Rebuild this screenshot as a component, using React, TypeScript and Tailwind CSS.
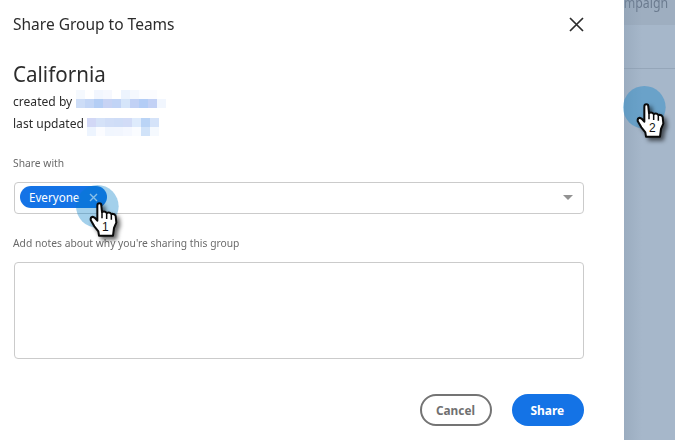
import React from 'react';

const createdCells = [
  ['#f5f9fe', '#ffffff', '#f2f6fe', '#f6f8fe', '#ffffff', '#edf4fe', '#f5f8fe', '#fbfcff', '#fbfcff', '#ffffff'],
  ['#cdddf7', '#c3d6f6', '#b4cef5', '#c7d3f4', '#c1d4f6', '#d5e5fa', '#c1d1f5', '#b3cdf6', '#c2d1f5', '#f1f6fe'],
];
const updatedCells = [
  ['#d2d8f6', '#d5e2f8', '#d1def7', '#cfddf7', '#d2dcf7', '#deebfc', '#bad4f6', '#d5e3f9'],
  ['#edf4fe', '#fbfcff', '#f1f6fe', '#f2f6fe', '#f5f8ff', '#fafcff', '#d1e3f9', '#f5f9fe'],
];

function Mosaic({ rows }: { rows: string[][] }) {
  return (
    <div>
      {rows.map((row, r) => (
        <div key={r} className="flex">
          {row.map((color, c) => (
            <span key={c} className="h-[9px] w-[9px]" style={{ backgroundColor: color }} />
          ))}
        </div>
      ))}
    </div>
  );
}

function Pointer({ step }: { step: string }) {
  return (
    <svg width="70" height="70" viewBox="0 0 210 210" className="block overflow-visible">
      <circle cx="82" cy="79" r="64" fill="rgb(0,125,200)" fillOpacity="0.36" />
      <g className="[filter:drop-shadow(9px_9px_7px_rgba(0,0,0,0.6))]">
        <path
          d="M82 121 L82 77 Q82 70 88 70 Q94 70 94 77 L96 96 Q105 92 110 99 Q119 95 124 102 Q134 100 137 108 L139 128 L132 144 L129 167 L87 167 L85 154 L73 139 L62 120 Q61 111 68 110 Q74 111 82 122 Z"
          fill="white"
          stroke="#0a0a0a"
          strokeWidth="6"
          strokeLinejoin="round"
        />
      </g>
      <path d="M96 96 V115 M110 99 V117 M124 102 V119" stroke="#0a0a0a" strokeWidth="4.5" />
      <text x="106" y="153" textAnchor="middle" className="font-['Liberation_Sans',sans-serif] text-[36px]" fill="#111">
        {step}
      </text>
    </svg>
  );
}

function Cross({ size, color, width }: { size: number; color: string; width: number }) {
  return (
    <svg width={size} height={size} viewBox={`0 0 ${size} ${size}`} className="block">
      <path d={`M1 1 L${size - 1} ${size - 1} M${size - 1} 1 L1 ${size - 1}`} stroke={color} strokeWidth={width} />
    </svg>
  );
}

export default function App() {
  return (
    <div className="relative flex h-[440px] w-[675px] overflow-hidden bg-white font-['Noto_Sans','Open_Sans',sans-serif] text-[#2c2c2c]">
      <main className="w-[624px] shrink-0 pl-[13px]">
        <header className="flex h-[48px] w-[571px] items-center justify-between">
          <h1 className="origin-left scale-x-[0.94] text-[16.5px] whitespace-nowrap">Share Group to Teams</h1>
          <button aria-label="Close"><Cross size={15} color="#2c2c2c" width={1.7} /></button>
        </header>
        <h2 className="mt-[9px] h-[33px] origin-left scale-x-[0.935] text-[22px] leading-[33px]">California</h2>
        <div className="flex h-[22px] items-start">
          <span className="w-[63px] origin-left scale-x-[0.93] text-[13px] leading-[23px] whitespace-nowrap">created by</span>
          <Mosaic rows={createdCells} />
        </div>
        <div className="flex h-[22px] items-start">
          <span className="w-[74px] origin-left scale-x-[0.93] text-[13px] leading-[23px] whitespace-nowrap">last updated</span>
          <div className="mt-[6px]"><Mosaic rows={updatedCells} /></div>
        </div>
        <label className="mt-[20px] block h-[18px] origin-left scale-x-[0.895] text-[11.5px] leading-[18px] text-[#6a6a6a]">Share with</label>
        <div className="mt-[10px] ml-px flex h-[32px] w-[570px] items-center rounded-[4px] border border-[#cbcbcb] pr-[10px] pl-[5px]">
          <div className="flex h-[22px] w-[87px] -translate-y-px items-center rounded-full bg-[#1473e6] pl-[9px] text-white">
            <span className="w-[60px] origin-left translate-y-px scale-x-[0.93] text-[12.5px]">Everyone</span>
            <Cross size={9} color="#d5e6fa" width={1.4} />
          </div>
          <svg width="10" height="5" className="ml-auto -translate-y-px"><path d="M0 0H10L5 5Z" fill="#929292" /></svg>
        </div>
        <label className="mt-[20px] block h-[18px] origin-left scale-x-[0.895] text-[11.5px] leading-[18px] text-[#6a6a6a]">Add notes about why you're sharing this group</label>
        <div className="mt-[10px] ml-px h-[97px] w-[570px] rounded-[4px] border border-[#cbcbcb]" />
        <div className="mt-[35px] ml-px flex w-[570px] justify-end gap-[20px]">
          <button className="flex h-[32px] w-[72px] items-center justify-center rounded-full border-2 border-[#747474] pr-px text-[13px] font-bold text-[#707070]"><span className="scale-x-[0.91] translate-y-px">Cancel</span></button>
          <button className="flex h-[32px] w-[72px] items-center justify-center rounded-full bg-[#1473e6] pr-px text-[13px] font-bold text-white"><span className="scale-x-[0.92] translate-y-px">Share</span></button>
        </div>
      </main>
      <aside className="relative w-[51px] overflow-hidden bg-[#a6b7ca] text-[#6b7b8f]">
        <div className="flex h-[25px] justify-end overflow-hidden bg-[#9eaec0] pr-[7px]">
          <span className="-mt-[7px] origin-right scale-x-[0.88] text-[14px] leading-[20px]">Campaign</span>
        </div>
        <div className="h-[44px] border-b border-[#95a6b9]" />
        <div className="absolute inset-y-0 left-0 w-[18px] bg-linear-to-r from-[#8194a850] to-transparent" />
      </aside>
      <div className="absolute top-[180px] left-[70px]"><Pointer step="1" /></div>
      <div className="absolute top-[81px] left-[617px]"><Pointer step="2" /></div>
    </div>
  );
}
